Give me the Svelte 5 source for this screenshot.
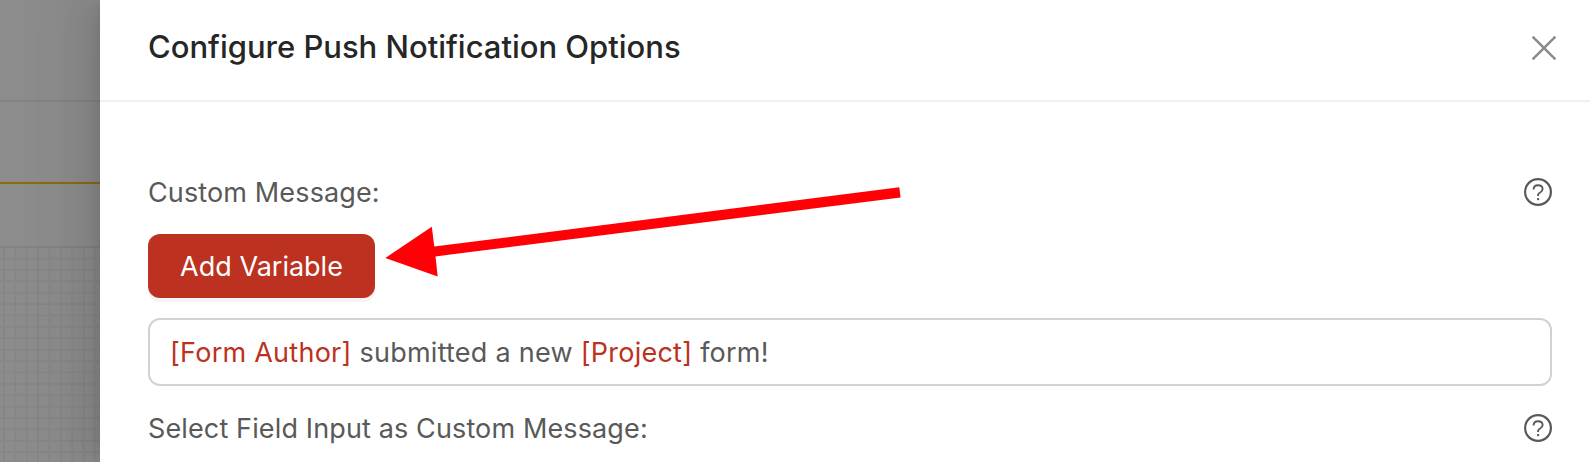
<script>
  let title = "Configure Push Notification Options";

  let message = [
    { text: "[Form Author]", variable: true },
    { text: " submitted a new " },
    { text: "[Project]", variable: true },
    { text: " form!" },
  ];
</script>

{#snippet help()}
  <svg class="help" width="28" height="28" viewBox="0 0 28 28" role="img" aria-label="Help">
    <circle cx="14" cy="14" r="12.9" />
    <path d="M9.6 11.4C9.6 8.7 11.5 7.2 14.1 7.2s4.5 1.5 4.5 3.8c0 1.9-1.2 2.8-2.5 3.5-1.4.7-2 1.3-2 2.5v1" />
    <rect x="13" y="20" width="2.2" height="2.2" rx="0.8" />
  </svg>
{/snippet}

<div class="page">
  <div class="backdrop">
    <div class="topbar"></div>
    <div class="tabs"></div>
    <div class="toolbar"></div>
    <div class="canvas"></div>
  </div>

  <section class="drawer">
    <header>
      <h1>{title}</h1>
      <button class="close" aria-label="Close">
        <svg width="26" height="26" viewBox="0 0 26 26">
          <path d="M1.6 1.6L24.4 24.4M24.4 1.6L1.6 24.4" />
        </svg>
      </button>
    </header>

    <div class="content">
      <div class="row">
        <span class="label">Custom Message:</span>
        {@render help()}
      </div>

      <button class="add">Add Variable</button>

      <div class="input">
        {#each message as part}<span class:variable={part.variable}>{part.text}</span>{/each}
      </div>

      <div class="row">
        <span class="label">Select Field Input as Custom Message:</span>
        {@render help()}
      </div>
    </div>
  </section>

  <svg class="arrow" width="520" height="96" viewBox="384 184 520 96">
    <polygon points="385.3,258 431.8,226.8 434.3,246.6 899.3,187.2 900.6,197.4 435.5,256.4 437.7,276.6" />
  </svg>
</div>

<style>
  :global(body) {
    margin: 0;
    overflow: hidden;
  }

  .page {
    position: relative;
    display: flex;
    width: 1590px;
    height: 462px;
    overflow: hidden;
    font-family: Inter, "Liberation Sans", sans-serif;
    font-size: 27px;
    color: #595959;
  }

  .backdrop {
    display: flex;
    flex-direction: column;
    width: 100px;
    flex-shrink: 0;
    background: #8c8c8c;
  }

  .backdrop div {
    box-sizing: border-box;
  }

  .topbar {
    height: 102px;
    border-bottom: 2px solid #828282;
  }

  .tabs {
    height: 82px;
    border-bottom: 2px solid #8c6b0e;
  }

  .toolbar {
    height: 64px;
    border-bottom: 2px solid #838383;
  }

  .canvas {
    flex: 1;
    background-image: linear-gradient(90deg, #868686 1.5px, transparent 1.5px),
      linear-gradient(#868686 1.5px, transparent 1.5px);
    background-size: 11.4px 11.4px;
    background-position: 3px 9.6px;
  }

  .drawer {
    position: relative;
    flex: 1;
    background: #fff;
    box-shadow:
      -12px 0 32px 0 rgba(0, 0, 0, 0.08),
      -6px 0 12px -8px rgba(0, 0, 0, 0.12),
      -18px 0 56px 16px rgba(0, 0, 0, 0.05);
  }

  header {
    display: flex;
    align-items: center;
    justify-content: space-between;
    box-sizing: border-box;
    height: 102px;
    padding: 0 33px 6px 48px;
    border-bottom: 2px solid #f0f0f0;
  }

  h1 {
    margin: 0;
    font-size: 31px;
    font-weight: 550;
    line-height: 44px;
    letter-spacing: -0.01px;
    color: #262626;
    white-space: nowrap;
  }

  button {
    border: 0;
    font: inherit;
  }

  .close {
    padding: 0;
    margin-top: 2px;
    background: none;
    line-height: 0;
  }

  .close path {
    fill: none;
    stroke: #8c8c8c;
    stroke-width: 2.6;
  }

  .content {
    padding: 68px 38px 0 48px;
  }

  .row {
    display: flex;
    align-items: center;
    justify-content: space-between;
    height: 44px;
  }

  .label {
    letter-spacing: 0.13px;
    white-space: nowrap;
  }

  .help circle,
  .help path {
    fill: none;
    stroke: #595959;
    stroke-width: 2.2;
  }

  .help path {
    stroke-width: 1.9;
  }

  .help rect {
    fill: #595959;
  }

  .add {
    display: block;
    width: 227px;
    height: 64px;
    margin-top: 20px;
    padding: 0;
    border-radius: 12px;
    background: #bc3120;
    box-shadow: 0 4px 0 rgba(0, 0, 0, 0.045);
    color: #fff;
    text-align: center;
  }

  .input {
    box-sizing: border-box;
    height: 68px;
    margin: 20px 0;
    padding: 1px 20px 0;
    border: 2px solid #d2d2d2;
    border-radius: 12px;
    line-height: 64px;
    letter-spacing: 0.25px;
    white-space: pre;
  }

  .variable {
    color: #bc3120;
  }

  .arrow {
    position: absolute;
    left: 384px;
    top: 184px;
    fill: #ff0006;
  }
</style>
